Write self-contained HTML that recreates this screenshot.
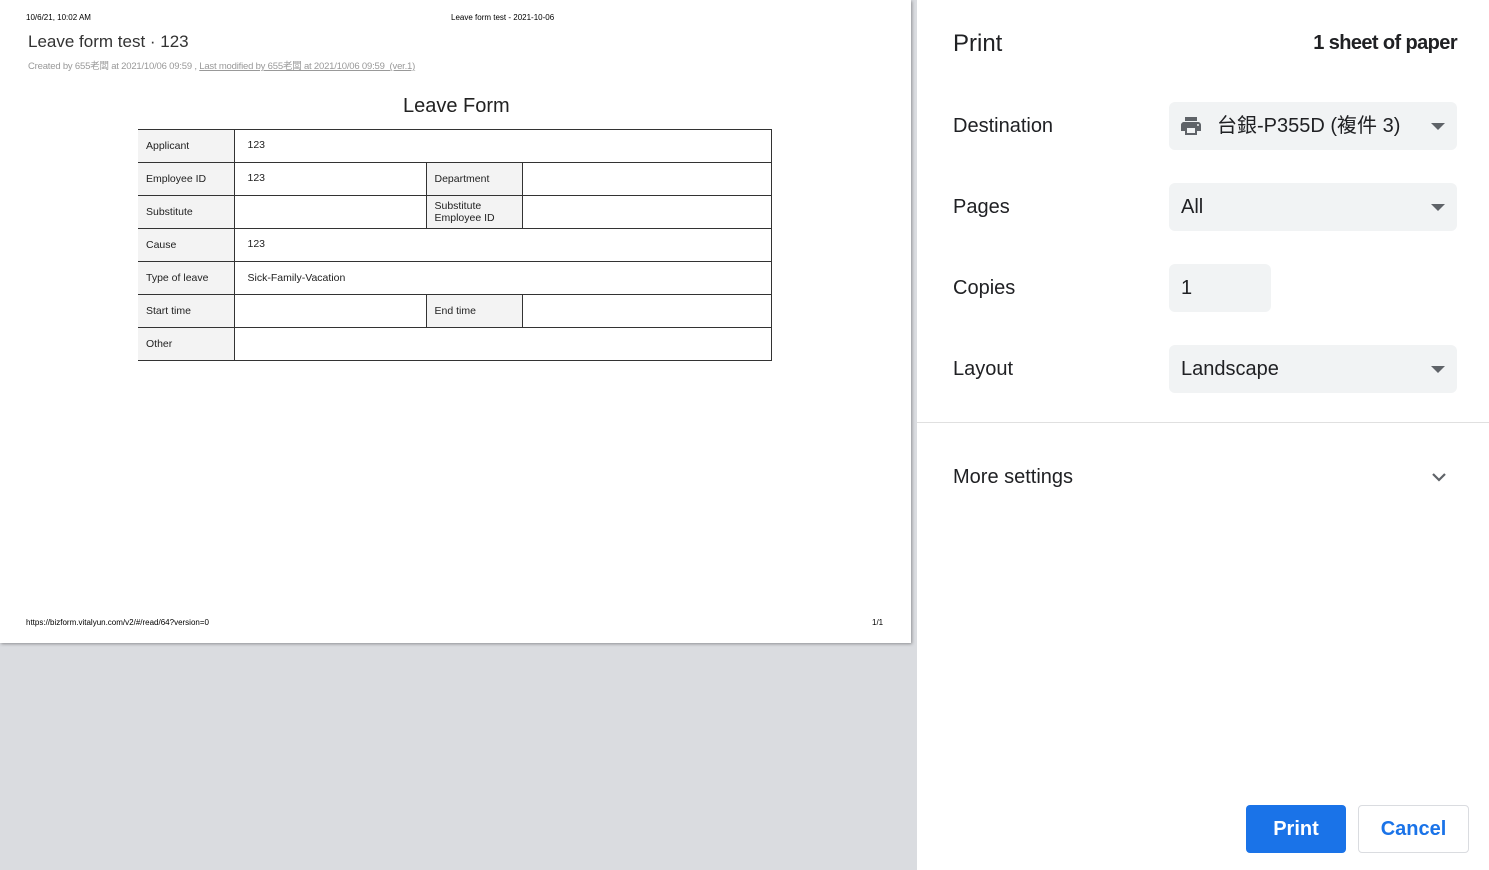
<!DOCTYPE html>
<html><head><meta charset="utf-8"><style>
*{margin:0;padding:0;box-sizing:border-box}
body{width:1489px;height:870px;overflow:hidden;background:#fff;font-family:"Liberation Sans","Noto Sans CJK TC",sans-serif;position:relative}
#prev{position:absolute;left:0;top:0;width:917px;height:870px;background:#dadce0}
#page{position:absolute;left:0;top:0;width:911px;height:643px;background:#fff;box-shadow:1px 1px 3px rgba(0,0,0,.35)}
.a{position:absolute;white-space:nowrap}
table{position:absolute;left:138px;top:129px;border-collapse:collapse;width:634px;font-size:10.5px;color:#222}
td{border:1px solid #333;height:33px;padding:0 8px;vertical-align:middle;box-sizing:border-box}
tr td:first-child{border-left:none}
td.l{background:#f3f3f3;width:96px}
td.v{padding-left:13px}
#panel{position:absolute;left:917px;top:0;width:572px;height:870px;background:#fff}
.lab{position:absolute;left:36px;font-size:20px;color:#202124}
.sel{position:absolute;left:252px;width:288px;height:48px;background:#f1f3f4;border-radius:6px;font-size:20px;color:#202124;line-height:48px;padding-left:12px}
.tri{position:absolute;right:12px;top:21px;width:0;height:0;border-left:7px solid transparent;border-right:7px solid transparent;border-top:7px solid #5f6368}
</style></head><body>
<div id="prev"><div id="page">
<div class="a" style="left:26px;top:13px;font-size:8px;color:#000">10/6/21, 10:02 AM</div>
<div class="a" style="left:451px;top:13px;font-size:8px;color:#000">Leave form test - 2021-10-06</div>
<div class="a" style="left:28px;top:32px;font-size:17px;color:#333">Leave form test · 123</div>
<div class="a" style="left:28px;top:58px;font-size:9.5px;color:#999;letter-spacing:-0.2px">Created by 655老闆 at 2021/10/06 09:59 , <u>Last modified by 655老闆 at 2021/10/06 09:59 &nbsp;(ver.1)</u></div>
<div class="a" style="left:403px;top:95px;font-size:20px;color:#222">Leave Form</div>
<table>
<tr><td class="l">Applicant</td><td class="v" colspan="3" style="vertical-align:top;padding-top:9px">123</td></tr>
<tr><td class="l">Employee ID</td><td class="v" style="width:192px;vertical-align:top;padding-top:9px">123</td><td class="l" style="width:96px">Department</td><td></td></tr>
<tr><td class="l">Substitute</td><td></td><td class="l" style="line-height:12px">Substitute<br>Employee ID</td><td></td></tr>
<tr><td class="l">Cause</td><td class="v" colspan="3" style="vertical-align:top;padding-top:9px">123</td></tr>
<tr><td class="l">Type of leave</td><td class="v" colspan="3">Sick-Family-Vacation</td></tr>
<tr><td class="l">Start time</td><td></td><td class="l">End time</td><td></td></tr>
<tr><td class="l">Other</td><td colspan="3"></td></tr>
</table>
<div class="a" style="left:26px;top:618px;font-size:8px;color:#000">https://bizform.vitalyun.com/v2/#/read/64?version=0</div>
<div class="a" style="left:872px;top:618px;font-size:8px;color:#000">1/1</div>
</div></div>
<div id="panel">
<div class="a" style="left:36px;top:30px;font-size:24px;color:#202124">Print</div>
<div class="a" style="right:32px;top:32px;font-size:20px;color:#202124;font-weight:bold;letter-spacing:-0.6px">1 sheet of paper</div>
<div class="lab" style="top:115px">Destination</div>
<div class="sel" style="top:102px;padding-left:48px">
<svg style="position:absolute;left:9px;top:12px" width="26" height="24" viewBox="0 0 24 24"><path fill="#5f6368" d="M19 8H5c-1.66 0-3 1.340-3 3v6h4v4h12v-4h4v-6c0-1.66-1.34-3-3-3zm-3 11H8v-5h8v5zm3-7c-.55 0-1-.45-1-1s.45-1 1-1 1 .45 1 1-.45 1-1 1zm-1-9H6v4h12V3z"/></svg>
台銀-P355D (複件 3)<div class="tri"></div></div>
<div class="lab" style="top:196px">Pages</div>
<div class="sel" style="top:183px">All<div class="tri"></div></div>
<div class="lab" style="top:277px">Copies</div>
<div class="sel" style="top:264px;width:102px">1</div>
<div class="lab" style="top:358px">Layout</div>
<div class="sel" style="top:345px">Landscape<div class="tri"></div></div>
<div class="a" style="left:0;top:422px;width:572px;height:1px;background:#e0e0e0"></div>
<div class="lab" style="top:466px">More settings</div>
<svg style="position:absolute;left:513px;top:470px" width="18" height="14" viewBox="0 0 18 14"><path d="M3 4l6 6 6-6" stroke="#5f6368" stroke-width="2.2" fill="none"/></svg>
<div class="a" style="left:329px;top:805px;width:100px;height:48px;background:#1a73e8;border-radius:4px;color:#fff;font-size:20px;font-weight:bold;line-height:48px;text-align:center">Print</div>
<div class="a" style="left:441px;top:805px;width:111px;height:48px;border:1px solid #dadce0;border-radius:4px;color:#1a73e8;font-size:20px;font-weight:bold;line-height:46px;text-align:center">Cancel</div>
</div>
</body></html>
